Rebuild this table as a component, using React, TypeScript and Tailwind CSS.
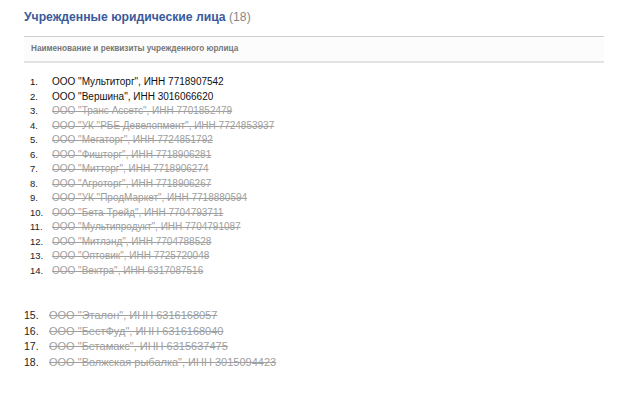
const activeItems: string[] = [
  'ООО "Мультиторг", ИНН 7718907542',
  'ООО "Вершина", ИНН 3016066620',
];

const closedItems: string[] = [
  'ООО "Транс Ассетс", ИНН 7701852479',
  'ООО "УК "РБЕ Девелопмент", ИНН 7724853937',
  'ООО "Мегаторг", ИНН 7724851792',
  'ООО "Фишторг", ИНН 7718906281',
  'ООО "Митторг", ИНН 7718906274',
  'ООО "Агроторг", ИНН 7718906267',
  'ООО "УК "ПродМаркет", ИНН 7718880594',
  'ООО "Бета-Трейд", ИНН 7704793711',
  'ООО "Мультипродукт", ИНН 7704791087',
  'ООО "Митлэнд", ИНН 7704788528',
  'ООО "Оптовик", ИНН 7725720048',
  'ООО "Вектра", ИНН 6317087516',
];

const lateItems: string[] = [
  'ООО "Эталон", ИНН 6316168057',
  'ООО "БестФуд", ИНН 6316168040',
  'ООО "Бетамакс", ИНН 6315637475',
  'ООО "Волжская рыбалка", ИНН 3015094423',
];

export default function App() {
  return (
    <div className="w-[619px] h-[394px] bg-white pl-6 pr-[15px] font-['Liberation_Sans',Arial,sans-serif]">
      {/* Title */}
      <h2 className="pt-[10px] text-[12.2px] leading-[14px] font-bold text-[#3a5a9c]">
        Учрежденные юридические лица <span className="font-normal text-[#888]">(18)</span>
      </h2>

      {/* Table header */}
      <div className="mt-3 border-t border-[#cfcfcf] border-b-2 border-b-[#e3e3e3] bg-[#fcfcfc] h-[27px] flex items-center pl-[7px] pt-[1px]">
        <span className="text-[8.2px] font-bold text-[#777]">Наименование и реквизиты учрежденного юрлица</span>
      </div>

      {/* Main list */}
      <ol className="mt-[12px] pl-[6px] text-[10px] leading-[14.5px]">
        {activeItems.map((item, i) => (
          <li key={item} className="flex items-baseline text-[#111]">
            <span className="w-[22px] shrink-0 text-[9.5px]">{i + 1}.</span>
            <span>{item}</span>
          </li>
        ))}
        {closedItems.map((item, i) => (
          <li key={item} className="flex items-baseline">
            <span className="w-[22px] shrink-0 text-[9.5px] text-[#222]">{i + 3}.</span>
            <span className="text-[#a0a0a0] line-through">{item}</span>
          </li>
        ))}
      </ol>

      {/* Later list */}
      <ol className="mt-[30px] text-[11px] leading-[15.7px]">
        {lateItems.map((item, i) => (
          <li key={item} className="flex items-baseline">
            <span className="w-[25px] shrink-0 text-[10.5px] text-[#222]">{i + 15}.</span>
            <span className="text-[#a0a0a0] line-through">{item}</span>
          </li>
        ))}
      </ol>
    </div>
  );
}
